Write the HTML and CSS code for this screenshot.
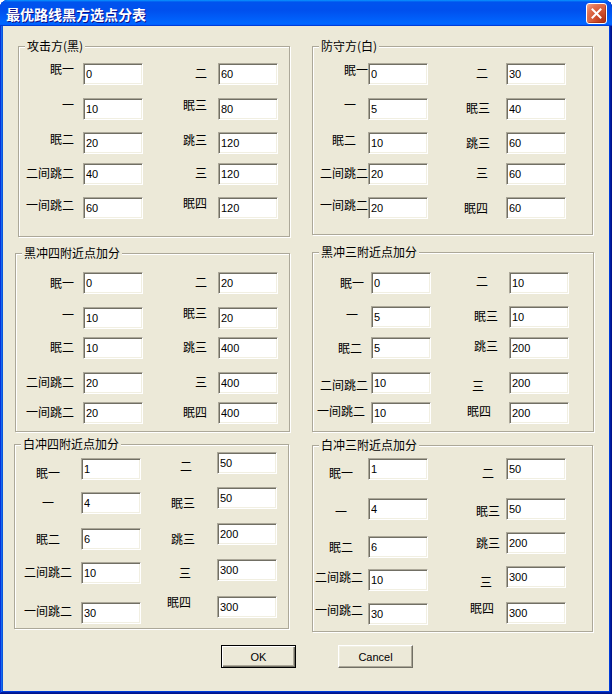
FILE: index.html
```html
<!DOCTYPE html>
<html>
<head>
<meta charset="utf-8">
<title>最优路线黑方选点分表</title>
<link rel="stylesheet" href="styles.css">
</head>
<body>
<div class="window">
  <div class="titlebar">
    <span class="title">最优路线黑方选点分表</span>
    <span class="close"><svg width="11" height="11" viewBox="0 0 11 11"><path d="M1.5 1.5 L9.5 9.5 M9.5 1.5 L1.5 9.5" stroke="#fff" stroke-width="2" stroke-linecap="square"/></svg></span>
  </div>
  <div class="client">
    <section class="grp g1">
      <div class="cap">攻击方(黑)</div>
      <div class="cols">
        <div class="col cl">
          <div class="f"><span class="lb u5">眠一</span><input class="ed" value="0" readonly></div>
          <div class="f"><span class="lb u4">一</span><input class="ed" value="10" readonly></div>
          <div class="f"><span class="lb u4">眠二</span><input class="ed" value="20" readonly></div>
          <div class="f"><span class="lb u1">二间跳二</span><input class="ed" value="40" readonly></div>
          <div class="f"><span class="lb u3">一间跳二</span><input class="ed" value="60" readonly></div>
        </div>
        <div class="col cr">
          <div class="f"><span class="lb u1">二</span><input class="ed" value="60" readonly></div>
          <div class="f"><span class="lb u4">眠三</span><input class="ed" value="80" readonly></div>
          <div class="f"><span class="lb u3">跳三</span><input class="ed" value="120" readonly></div>
          <div class="f"><span class="lb u1">三</span><input class="ed" value="120" readonly></div>
          <div class="f"><span class="lb u5">眠四</span><input class="ed" value="120" readonly></div>
        </div>
      </div>
    </section>

    <section class="grp g2">
      <div class="cap">防守方(白)</div>
      <div class="cols">
        <div class="col cl">
          <div class="f"><span class="lb p0 u4">眠一</span><input class="ed" value="0" readonly></div>
          <div class="f"><span class="lb p12 u4">一</span><input class="ed" value="5" readonly></div>
          <div class="f"><span class="lb p12 u3">眠二</span><input class="ed" value="10" readonly></div>
          <div class="f"><span class="lb p0 u1">二间跳二</span><input class="ed" value="20" readonly></div>
          <div class="f"><span class="lb p0 u3">一间跳二</span><input class="ed" value="20" readonly></div>
        </div>
        <div class="col cr">
          <div class="f"><span class="lb p18 u1">二</span><input class="ed" value="30" readonly></div>
          <div class="f"><span class="lb p16 u1">眠三</span><input class="ed" value="40" readonly></div>
          <div class="f"><span class="lb p16">跳三</span><input class="ed" value="60" readonly></div>
          <div class="f"><span class="lb p18 u1">三</span><input class="ed" value="60" readonly></div>
          <div class="f"><span class="lb p18">眠四</span><input class="ed" value="60" readonly></div>
        </div>
      </div>
    </section>

    <section class="grp g3">
      <div class="cap">黑冲四附近点加分</div>
      <div class="cols">
        <div class="col cl">
          <div class="f"><span class="lb">眠一</span><input class="ed" value="0" readonly></div>
          <div class="f"><span class="lb u3">一</span><input class="ed" value="10" readonly></div>
          <div class="f"><span class="lb u1">眠二</span><input class="ed" value="10" readonly></div>
          <div class="f"><span class="lb u1">二间跳二</span><input class="ed" value="20" readonly></div>
          <div class="f"><span class="lb u1">一间跳二</span><input class="ed" value="20" readonly></div>
        </div>
        <div class="col cr">
          <div class="f"><span class="lb u1">二</span><input class="ed" value="20" readonly></div>
          <div class="f"><span class="lb u5">眠三</span><input class="ed" value="20" readonly></div>
          <div class="f"><span class="lb u1">跳三</span><input class="ed" value="400" readonly></div>
          <div class="f"><span class="lb u1">三</span><input class="ed" value="400" readonly></div>
          <div class="f"><span class="lb u1">眠四</span><input class="ed" value="400" readonly></div>
        </div>
      </div>
    </section>

    <section class="grp g4">
      <div class="cap">黑冲三附近点加分</div>
      <div class="cols">
        <div class="col cl">
          <div class="f"><span class="lb p7">眠一</span><input class="ed" value="0" readonly></div>
          <div class="f"><span class="lb p13 u2">一</span><input class="ed" value="5" readonly></div>
          <div class="f"><span class="lb p9">眠二</span><input class="ed" value="5" readonly></div>
          <div class="f"><span class="lb p3 d2">二间跳二</span><input class="ed" value="10" readonly></div>
          <div class="f"><span class="lb p6 u2">一间跳二</span><input class="ed" value="10" readonly></div>
        </div>
        <div class="col cr">
          <div class="f"><span class="lb p21 u2">二</span><input class="ed" value="10" readonly></div>
          <div class="f"><span class="lb p11 u1">眠三</span><input class="ed" value="10" readonly></div>
          <div class="f"><span class="lb p11 u2">跳三</span><input class="ed" value="200" readonly></div>
          <div class="f"><span class="lb p25 d3">三</span><input class="ed" value="200" readonly></div>
          <div class="f"><span class="lb p18 u2">眠四</span><input class="ed" value="200" readonly></div>
        </div>
      </div>
    </section>

    <section class="grp g5">
      <div class="cap">白冲四附近点加分</div>
      <div class="cols">
        <div class="col cl">
          <div class="f"><span class="lb p21 d4">眠一</span><input class="ed" value="1" readonly></div>
          <div class="f"><span class="lb p27">一</span><input class="ed" value="4" readonly></div>
          <div class="f"><span class="lb p21">眠二</span><input class="ed" value="6" readonly></div>
          <div class="f"><span class="lb p9 u1">二间跳二</span><input class="ed" value="10" readonly></div>
          <div class="f"><span class="lb p9 u2">一间跳二</span><input class="ed" value="30" readonly></div>
        </div>
        <div class="col cr">
          <div class="f"><span class="lb p25 d3">二</span><input class="ed" value="50" readonly></div>
          <div class="f"><span class="lb p22 d5">眠三</span><input class="ed" value="50" readonly></div>
          <div class="f"><span class="lb p22 d5">跳三</span><input class="ed" value="200" readonly></div>
          <div class="f"><span class="lb p26 d3">三</span><input class="ed" value="300" readonly></div>
          <div class="f"><span class="lb p26 u5">眠四</span><input class="ed" value="300" readonly></div>
        </div>
      </div>
    </section>

    <section class="grp g6">
      <div class="cap">白冲三附近点加分</div>
      <div class="cols">
        <div class="col cl">
          <div class="f"><span class="lb p15 d4">眠一</span><input class="ed" value="1" readonly></div>
          <div class="f"><span class="lb p21 d3">一</span><input class="ed" value="4" readonly></div>
          <div class="f"><span class="lb p15">眠二</span><input class="ed" value="6" readonly></div>
          <div class="f"><span class="lb p5 u3">二间跳二</span><input class="ed" value="10" readonly></div>
          <div class="f"><span class="lb p5 u4">一间跳二</span><input class="ed" value="30" readonly></div>
        </div>
        <div class="col cr">
          <div class="f"><span class="lb p12 d4">二</span><input class="ed" value="50" readonly></div>
          <div class="f"><span class="lb p6 d2">眠三</span><input class="ed" value="50" readonly></div>
          <div class="f"><span class="lb p6">跳三</span><input class="ed" value="200" readonly></div>
          <div class="f"><span class="lb p14 d5">三</span><input class="ed" value="300" readonly></div>
          <div class="f"><span class="lb p12 u5">眠四</span><input class="ed" value="300" readonly></div>
        </div>
      </div>
    </section>

    <div class="buttons">
      <button class="btn default">OK</button>
      <button class="btn">Cancel</button>
    </div>
  </div>
</div>
</body>
</html>
```

FILE: styles.css
```css
* { box-sizing: border-box; }

html, body { margin: 0; padding: 0; }

body {
  width: 612px;
  height: 694px;
  overflow: hidden;
  background: #ffffff;
  font-family: "Noto Sans CJK SC", "Noto Sans", sans-serif;
  font-size: 12px;
  color: #000;
}

.window {
  width: 612px;
  height: 694px;
  display: flex;
  flex-direction: column;
  background: #0831d9;
  border-radius: 8px 8px 0 0;
  overflow: hidden;
  box-shadow: inset -1px -1px #00138c, inset 1px 1px #0831d9,
              inset -2px -2px #001ea0, inset 2px 2px #166aee,
              inset -3px -3px #003bda, inset 3px 3px #0855dd;
}

.titlebar {
  flex: none;
  height: 26px;
  display: flex;
  align-items: center;
  padding: 0 5px 0 6px;
  background: linear-gradient(180deg, #0997ff, #0053ee 8%, #0050ee 40%, #0066ff 88%, #0066ff 93%, #005bff 95%, #003dd7 96%, #003dd7);
}

.title {
  flex: 1;
  color: #fff;
  font-weight: 700;
  font-size: 14px;
  line-height: 16px;
  padding-top: 2px;
  text-shadow: 1px 1px #0f1089;
  white-space: nowrap;
}

.close {
  flex: none;
  width: 21px;
  height: 21px;
  border: 1px solid #fff;
  border-radius: 3px;
  display: flex;
  align-items: center;
  justify-content: center;
  background: radial-gradient(circle at 85% 85%, #b1341a 0%, #cf4f2c 35%, #e0704f 70%, #f2a68e 100%);
  box-shadow: inset -1px -1px rgba(120, 20, 0, 0.4);
}

.client {
  flex: 1;
  margin: 0 3px 3px;
  background: #ece9d8;
  display: grid;
  grid-template-columns: 309px 297px;
  grid-template-rows: 212px 195px 212px 1fr;
  align-items: start;
}

/* group boxes */
.grp {
  border: 1px solid #aca899;
  box-shadow: inset 1px 1px #fff, 1px 1px #fff;
}

.cap {
  display: table;
  height: 14px;
  line-height: 14px;
  margin: -8px 0 0 6px;
  padding: 0 2px;
  background: #ece9d8;
  white-space: nowrap;
}

.g1 { margin: 20px 0 0 15px; width: 272px; height: 191px; }
.g2 { margin: 20px 0 0 0; width: 281px; height: 189px; }
.g3 { margin: 15px 0 0 12px; width: 275px; height: 179px; }
.g4 { margin: 14px 0 0 0; width: 282px; height: 180px; }
.g5 { margin: 11px 0 0 11px; width: 275px; height: 185px; }
.g6 { margin: 12px 0 0 0; width: 281px; height: 187px; }

.cols { display: flex; align-items: flex-start; }

.col { display: grid; align-items: start; }

.f {
  display: flex;
  align-items: center;
  height: 22px;
}

.lb {
  flex: none;
  height: 14px;
  line-height: 14px;
  text-align: right;
  white-space: nowrap;
}

.ed {
  flex: none;
  width: 60px;
  height: 22px;
  margin: 0;
  padding: 0 2px;
  border: 1px solid;
  border-color: #aca899 #fff #fff #aca899;
  box-shadow: inset 1px 1px #716f64, inset -1px -1px #f1efe2;
  background: #fff;
  font: 11px "Liberation Sans", Arial, sans-serif;
  color: #000;
  outline: none;
}

/* per-group columns */
.g1 .cl, .g1 .cr, .g2 .cl, .g2 .cr { padding-top: 10px; grid-template-rows: 35px 34px 31px 34px 22px; }
.g1 .cl .lb { width: 64px; padding-right: 9px; }
.g1 .cr .lb { width: 75px; padding-right: 11px; }
.g2 .cl .lb { width: 55px; }
.g2 .cr .lb { width: 78px; }

.g3 .cl, .g3 .cr { padding-top: 12px; grid-template-rows: 35px 30px 35px 30px 22px; }
.g3 .cl .lb { width: 67px; padding-right: 9px; }
.g3 .cr .lb { width: 75px; padding-right: 11px; }

.g4 .cl, .g4 .cr { padding-top: 13px; grid-template-rows: 34px 31px 35px 30px 22px; }
.g4 .cl .lb { width: 58px; }
.g4 .cr .lb { width: 78px; }

.g5 .cl { padding-top: 7px; grid-template-rows: 34px 36px 34px 40px 22px; }
.g5 .cr { padding-top: 1px; grid-template-rows: 35px 36px 36px 37px 22px; }
.g5 .cl .lb { width: 66px; }
.g5 .cr .lb { width: 76px; }

.g6 .cl { padding-top: 6px; grid-template-rows: 40px 38px 33px 34px 22px; }
.g6 .cr { padding-top: 6px; grid-template-rows: 40px 34px 34px 36px 22px; }
.g6 .cl .lb { width: 55px; }
.g6 .cr .lb { width: 78px; }

/* label right gaps */
.p0 { padding-right: 0; }
.p3 { padding-right: 3px; }
.p5 { padding-right: 5px; }
.p6 { padding-right: 6px; }
.p7 { padding-right: 7px; }
.p9 { padding-right: 9px; }
.p11 { padding-right: 11px; }
.p12 { padding-right: 12px; }
.p13 { padding-right: 13px; }
.p14 { padding-right: 14px; }
.p15 { padding-right: 15px; }
.p16 { padding-right: 16px; }
.p18 { padding-right: 18px; }
.p21 { padding-right: 21px; }
.p22 { padding-right: 22px; }
.p25 { padding-right: 25px; }
.p26 { padding-right: 26px; }
.p27 { padding-right: 27px; }

/* label vertical nudges (relative to field centre) */
.u1 { margin-bottom: 2px; }
.u2 { margin-bottom: 4px; }
.u3 { margin-bottom: 6px; }
.u4 { margin-bottom: 8px; }
.u5 { margin-bottom: 10px; }
.d2 { margin-top: 4px; }
.d3 { margin-top: 6px; }
.d4 { margin-top: 8px; }
.d5 { margin-top: 10px; }

/* buttons */
.buttons {
  grid-column: 1 / -1;
  display: flex;
  gap: 42px;
  padding-left: 218px;
}

.btn {
  width: 75px;
  height: 23px;
  margin: 0;
  padding: 0;
  border: 1px solid;
  border-color: #fff #716f64 #716f64 #fff;
  box-shadow: inset -1px -1px #aca899, inset 1px 1px #f1efe2;
  background: #ece9d8;
  font: 11px "Liberation Sans", Arial, sans-serif;
  color: #000;
}

.btn.default {
  border-color: #000;
  box-shadow: inset 1px 1px #fff, inset -1px -1px #716f64, inset -2px -2px #aca899;
}
```
